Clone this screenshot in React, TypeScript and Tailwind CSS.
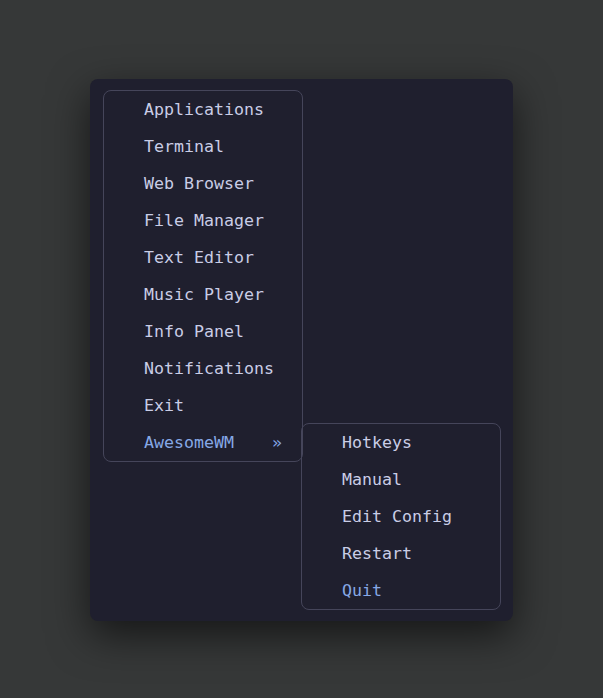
const mainItems = [
  "Applications",
  "Terminal",
  "Web Browser",
  "File Manager",
  "Text Editor",
  "Music Player",
  "Info Panel",
  "Notifications",
  "Exit",
];

const subItems = ["Hotkeys", "Manual", "Edit Config", "Restart"];

export default function App() {
  return (
    <div
      className="min-h-screen w-full bg-[#363838] flex items-center justify-center pt-[2px]"
      style={{ fontFamily: '"DejaVu Sans Mono", "Liberation Mono", monospace' }}
    >
      <div className="w-[423px] h-[542px] rounded-lg bg-[#1f1f2e] shadow-[0_14px_40px_rgba(0,0,0,0.6)] pt-[11px] px-[13px] flex items-start">
        {/* Main menu */}
        <div className="w-[200px] shrink-0 rounded-lg border border-[#45455a] flex flex-col">
          {mainItems.map((label) => (
            <div key={label} className="h-[37px] flex items-center pt-[2px] pl-[40px] text-[16.6px] text-[#c9cde6]">
              {label}
            </div>
          ))}
          <div className="h-[37px] flex items-center justify-between pt-[2px] pl-[40px] pr-[20px] text-[16.6px] text-[#86a8e6]">
            <span>AwesomeWM</span>
            <span>»</span>
          </div>
        </div>

        {/* Submenu */}
        <div className="w-[200px] shrink-0 -ml-[2px] mt-[333px] rounded-lg border border-[#45455a] flex flex-col">
          {subItems.map((label) => (
            <div key={label} className="h-[37px] flex items-center pt-[2px] pl-[40px] text-[16.6px] text-[#c9cde6]">
              {label}
            </div>
          ))}
          <div className="h-[37px] flex items-center pt-[2px] pl-[40px] text-[16.6px] text-[#86a8e6]">Quit</div>
        </div>
      </div>
    </div>
  );
}
